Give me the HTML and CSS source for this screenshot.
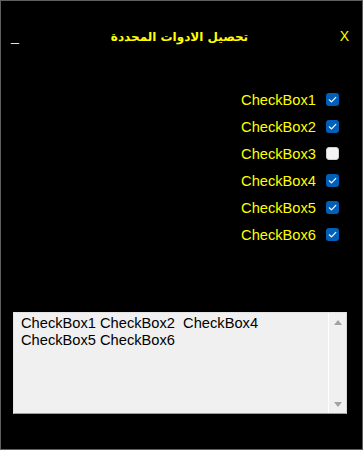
FILE: index.html
```html
<!DOCTYPE html>
<html lang="ar">
<head>
<meta charset="utf-8">
<title>تحصيل الادوات المحددة</title>
<link rel="stylesheet" href="styles.css">
</head>
<body>
<div class="window">
  <div class="titlebar" dir="ltr">
    <span class="min">_</span>
    <span class="title" dir="rtl">تحصيل الادوات المحددة</span>
    <span class="close">X</span>
  </div>

  <div class="checks" dir="ltr">
    <label class="row"><span class="lbl">CheckBox1</span><span class="box on"><svg viewBox="0 0 13 13" width="13" height="13"><path d="M3.3 6.8 L5.5 8.9 L9.8 4.4" fill="none" stroke="#fff" stroke-width="1.2" stroke-linecap="round" stroke-linejoin="round"/></svg></span></label>
    <label class="row"><span class="lbl">CheckBox2</span><span class="box on"><svg viewBox="0 0 13 13" width="13" height="13"><path d="M3.3 6.8 L5.5 8.9 L9.8 4.4" fill="none" stroke="#fff" stroke-width="1.2" stroke-linecap="round" stroke-linejoin="round"/></svg></span></label>
    <label class="row"><span class="lbl">CheckBox3</span><span class="box off"></span></label>
    <label class="row"><span class="lbl">CheckBox4</span><span class="box on"><svg viewBox="0 0 13 13" width="13" height="13"><path d="M3.3 6.8 L5.5 8.9 L9.8 4.4" fill="none" stroke="#fff" stroke-width="1.2" stroke-linecap="round" stroke-linejoin="round"/></svg></span></label>
    <label class="row"><span class="lbl">CheckBox5</span><span class="box on"><svg viewBox="0 0 13 13" width="13" height="13"><path d="M3.3 6.8 L5.5 8.9 L9.8 4.4" fill="none" stroke="#fff" stroke-width="1.2" stroke-linecap="round" stroke-linejoin="round"/></svg></span></label>
    <label class="row"><span class="lbl">CheckBox6</span><span class="box on"><svg viewBox="0 0 13 13" width="13" height="13"><path d="M3.3 6.8 L5.5 8.9 L9.8 4.4" fill="none" stroke="#fff" stroke-width="1.2" stroke-linecap="round" stroke-linejoin="round"/></svg></span></label>
  </div>

  <div class="memo" dir="ltr">
    <div class="memo-text">CheckBox1 CheckBox2  CheckBox4
CheckBox5 CheckBox6</div>
    <div class="scroll">
      <span class="arrow up"></span>
      <span class="arrow down"></span>
    </div>
  </div>
</div>
</body>
</html>
```

FILE: styles.css
```css
html, body {
  margin: 0;
  padding: 0;
  background: #000;
}

.window {
  box-sizing: border-box;
  width: 363px;
  height: 450px;
  border: 1px solid #5f5f5f;
  background: #000;
  font-family: "Liberation Sans", Arial, "DejaVu Sans", sans-serif;
  display: flex;
  flex-direction: column;
}

.titlebar {
  display: grid;
  grid-template-columns: 1fr auto 1fr;
  align-items: baseline;
  padding: 27px 13px 0 10px;
  color: #ffff00;
  font-size: 14px;
  line-height: 16px;
}

.min {
  justify-self: start;
}

.title {
  font-family: "DejaVu Sans", sans-serif;
  font-weight: bold;
  font-size: 12px;
  margin-right: 1px;
}

.close {
  justify-self: end;
}

.checks {
  margin-top: 41px;
  padding-right: 23px;
  display: flex;
  flex-direction: column;
  align-items: flex-end;
}

.row {
  height: 27px;
  display: flex;
  align-items: center;
  gap: 10px;
  color: #ffff00;
  font-size: 14.67px;
}

.box {
  box-sizing: border-box;
  width: 13px;
  height: 13px;
  border-radius: 3px;
  display: block;
}

.box svg {
  display: block;
}

.box.on {
  background: #005fb8;
}

.box.off {
  background: #f4f4f4;
  border: 1px solid #d0d0d0;
}

.memo {
  margin: 64px 0 0 12px;
  box-sizing: border-box;
  width: 334px;
  height: 102px;
  background: #f0f0f0;
  border: 1px solid #e4e4e4;
  border-bottom-color: #9c9c9c;
  border-right-color: #d8d8d8;
  display: flex;
}

.memo-text {
  flex: 1;
  padding: 2px 0 0 7px;
  white-space: pre;
  font-size: 14.67px;
  line-height: 17px;
  color: #000;
}

.scroll {
  width: 17px;
  border-left: 1px solid #ffffff;
  background: #f0f0f0;
  display: flex;
  flex-direction: column;
  justify-content: space-between;
  align-items: center;
  padding: 7px 0 6px;
}

.arrow {
  width: 0;
  height: 0;
  border-left: 4px solid transparent;
  border-right: 4px solid transparent;
}

.arrow.up {
  border-bottom: 5px solid #a3a3a3;
}

.arrow.down {
  border-top: 5px solid #a3a3a3;
}
```
